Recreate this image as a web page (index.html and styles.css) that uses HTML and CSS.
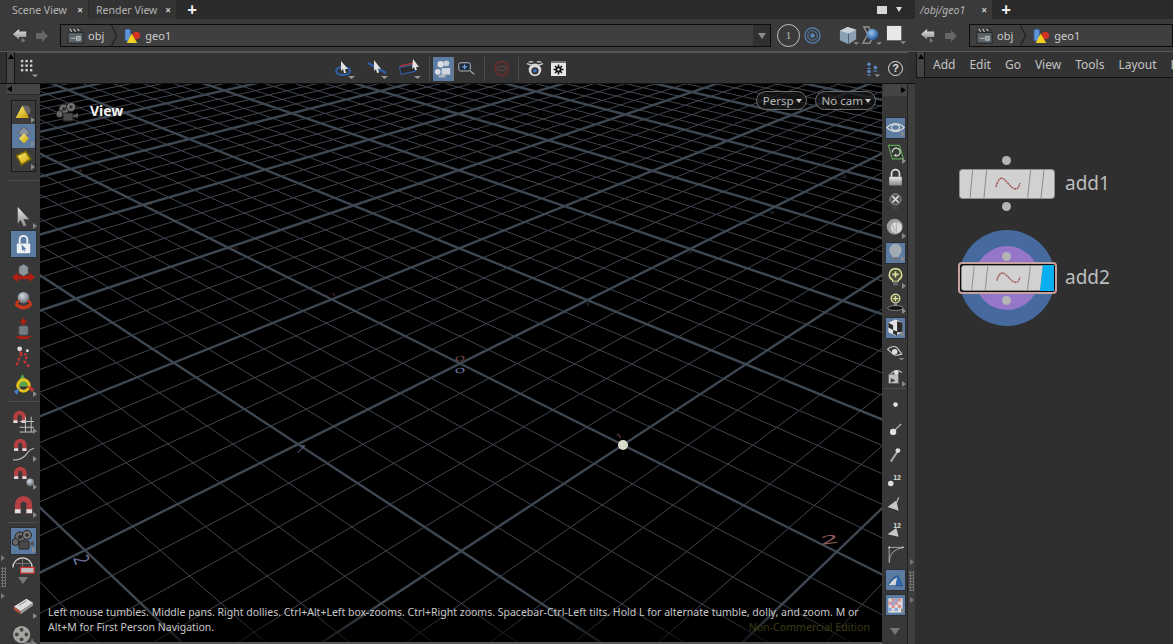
FILE: index.html
```html
<!DOCTYPE html>
<html lang="en">
<head>
<meta charset="utf-8">
<title>Houdini</title>
<link rel="stylesheet" href="styles.css">
</head>
<body>
<svg class="defs" aria-hidden="true"><defs>
<linearGradient id="gy" x1="0" y1="0" x2="0" y2="1"><stop offset="0" stop-color="#e8e8e8"/><stop offset="1" stop-color="#8a8a8a"/></linearGradient>
<radialGradient id="ball" cx=".4" cy=".35" r=".7"><stop offset="0" stop-color="#d5dbe2"/><stop offset="1" stop-color="#5f666e"/></radialGradient>
<radialGradient id="blue" cx=".4" cy=".35" r=".7"><stop offset="0" stop-color="#9cc4ee"/><stop offset="1" stop-color="#1f4f96"/></radialGradient>
<linearGradient id="yel" x1="0" y1="0" x2="1" y2="1"><stop offset="0" stop-color="#fff27a"/><stop offset="1" stop-color="#c79a00"/></linearGradient>
<symbol id="cam" viewBox="0 0 24 24"><circle cx="9" cy="8" r="5" fill="#6d6d6d" stroke="#222"/><circle cx="9" cy="8" r="2" fill="#2c2c2c"/><circle cx="16" cy="6" r="4.500" fill="#777" stroke="#222"/><circle cx="16" cy="6" r="1.800" fill="#2c2c2c"/><circle cx="4.500" cy="13" r="3.500" fill="#666" stroke="#222"/><rect x="8" y="12" width="10" height="8" rx="1" fill="#4a4a4a" stroke="#222"/><path d="M18 14l5-2v5l-5-1z" fill="#555"/></symbol>
<symbol id="objic" viewBox="0 0 18 18"><rect x="1" y="6" width="16" height="11" fill="#5d6469" stroke="#222"/><path d="M1 2l15-1 1 3L1 6z" fill="#33373a"/><path d="M3 2l2 3M7 2l2 3M11 2l2 2" stroke="#ccc" stroke-width="1.2"/><path d="M4 12h5M10 10h4v4h-4z" stroke="#b9c2c4" fill="#8b9396"/></symbol>
<symbol id="geoic" viewBox="0 0 18 18"><path d="M1 3q3-2 6 0v11q-3 2-6 0z" fill="#5f93d8" stroke="#2d5590" stroke-width=".6"/><circle cx="13" cy="9" r="4" fill="#d23323"/><path d="M8 7l6 10H3z" fill="#f3d21f"/></symbol>
<symbol id="backic" viewBox="0 0 18 18"><path d="M1 7l7-6v3h8v6H8v3z" fill="url(#gy)"/><path d="M11 11l4 3-4 3z" fill="#777"/></symbol>
<symbol id="fwdic" viewBox="0 0 14 14"><path d="M13 7L7 1v3H1v6h6v3z" fill="#666"/></symbol>
<symbol id="nodegraph" viewBox="0 0 96 30" preserveAspectRatio="none"><rect x=".5" y=".5" width="95" height="29" rx="3" fill="#d1d1d1" stroke="#8f8f8f"/><path d="M13.600 1L11 29M27.600 1L25 29M71.600 1L68.600 29M85 1L82 29" stroke="#8a8a8a"/><path d="M37 18c2-8 5-11 9-7s7 9 11 9c2 0 3-3 4-6" fill="none" stroke="#a55c5c" stroke-width="1.500" stroke-dasharray="2.400 .6"/></symbol>
<symbol id="redmove" viewBox="0 0 24 24"><path d="M0 17l6-5v3h12v-3l6 5-6 5v-3H6v3z" fill="#b21f12"/><path d="M7 6l5-3 5 3v7l-5 3-5-3z" fill="#8e959b" stroke="#444"/></symbol>
<symbol id="magnet" viewBox="0 0 24 24"><path d="M3 20V11a9 9 0 0 1 18 0v9h-6v-9a3 3 0 0 0-6 0v9z" fill="#b54043"/><path d="M3 16h6v4H3zM15 16h6v4h-6z" fill="#ddd"/></symbol>
<symbol id="bulb" viewBox="0 0 24 24"><path d="M12 1a8 8 0 0 0-5 14l1 3h8l1-3a8 8 0 0 0-5-14z" fill="#a3abb2"/><rect x="9" y="18" width="6" height="4" fill="#6f757b"/></symbol>
</defs></svg>

<div class="app">
  <section class="pane scene">
    <div class="tabs">
      <div class="tab active"><span>Scene View</span><b class="x">×</b></div>
      <div class="tab second"><span>Render View</span><b class="x">×</b></div>
      <div class="plus">+</div>
      <div class="tabspacer"></div>
      <div class="winsq"></div>
      <div class="tridown"></div>
    </div>
    <div class="pathbar">
      <svg class="nav" viewBox="0 0 18 18"><use href="#backic"/></svg>
      <svg class="nav fwd" viewBox="0 0 14 14"><use href="#fwdic"/></svg>
      <div class="path">
        <svg class="crumb" viewBox="0 0 18 18"><use href="#objic"/></svg><span class="ctext">obj</span>
        <svg class="chev" viewBox="0 0 8 24"><path d="M1 0l6 12-6 12" fill="none" stroke="#111"/></svg>
        <svg class="crumb" viewBox="0 0 18 18"><use href="#geoic"/></svg><span class="ctext">geo1</span>
        <div class="grow"></div>
        <div class="drop"><i class="tri"></i></div>
      </div>
      <div class="circle1">1</div>
      <svg class="target" viewBox="0 0 18 18"><circle cx="9" cy="9" r="8" fill="none" stroke="#5b84bd" stroke-width="1.3"/><circle cx="9" cy="9" r="5" fill="none" stroke="#5b84bd"/><circle cx="9" cy="9" r="2.4" fill="#5b84bd"/></svg>
      <svg class="pbic more-sv" viewBox="0 0 24 24"><path d="M3 7l8-4 9 3v10l-8 5-9-4z" fill="#8ba0b3"/><path d="M3 7l9 3 8-4-9-3z" fill="#c9d2d9"/><path d="M12 10v11" stroke="#54616c"/><path d="M17 19h6l-3 3z" fill="#888"/></svg>
      <svg class="pbic" viewBox="0 0 24 24"><path d="M4 3h5l5 10-4 7H3l5-9z" fill="none" stroke="#8a8a8a" stroke-width="1.6"/><circle cx="13" cy="11" r="6" fill="url(#blue)"/><path d="M17 19h6l-3 3z" fill="#888"/></svg>
      <svg class="pbic whitebox" viewBox="0 0 24 24"><rect x="2" y="2" width="15" height="15" fill="#e8e8e8"/><path d="M16 18h6l-3 3z" fill="#888"/></svg>
    </div>
    <div class="toolbar">
      <div class="handle"><i class="triup"></i></div>
      <div class="tbar">
        <svg class="dots" viewBox="0 0 22 22"><g fill="#cfcfcf"><rect x="1" y="1" width="2.6" height="2.6"/><rect x="6" y="1" width="2.6" height="2.6"/><rect x="11" y="1" width="2.6" height="2.6"/><rect x="1" y="6" width="2.6" height="2.6"/><rect x="6" y="6" width="2.6" height="2.6"/><rect x="11" y="6" width="2.6" height="2.6"/><rect x="1" y="11" width="2.6" height="2.6"/><rect x="6" y="11" width="2.6" height="2.6"/><rect x="11" y="11" width="2.6" height="2.6"/></g><path d="M13 17h7l-3.5 3z" fill="#999"/></svg>
        <div class="lead"></div>
        <svg class="ti" viewBox="0 0 24 24"><ellipse cx="10" cy="14" rx="7" ry="4" fill="none" stroke="#2f5fa8" stroke-width="2"/><path d="M8 4l7 8-3 0 1 4-2 0-1-4-2 2z" fill="#e2e2e2"/><path d="M15 19h7l-3.500 3z" fill="#999"/></svg>
        <svg class="ti" viewBox="0 0 24 24"><path d="M2 6l18 10" stroke="#2f5fa8" stroke-width="2.5"/><path d="M8 3l7 9-3-.5 1 4-2 .5-1-4-2 2z" fill="#e2e2e2"/><path d="M15 19h7l-3.500 3z" fill="#999"/></svg>
        <svg class="ti" viewBox="0 0 24 24"><rect x="1" y="9" width="15" height="7" transform="rotate(-12 8 12)" fill="#2b2b2b" stroke="#2f5fa8"/><path d="M1 9l14-3" stroke="#a33" stroke-width="1.5"/><path d="M14 2l6 8-3 0 1 3-2 0-1-3-2 2z" fill="#e2e2e2"/><path d="M15 19h7l-3.500 3z" fill="#999"/></svg>
        <span class="tsep first"></span>
        <div class="tsel"><svg viewBox="0 0 20 22"><circle cx="7" cy="6" r="3.4" fill="#d8dee4"/><circle cx="13" cy="5" r="3" fill="#c8ced6"/><circle cx="4" cy="14" r="3" fill="#d8dee4"/><rect x="8" y="10" width="9" height="7" fill="#cfd6dd"/><rect x="5" y="17" width="7" height="3" fill="#aeb6bf"/></svg></div>
        <svg class="tz" viewBox="0 0 22 18"><rect x="1" y="2" width="14" height="10" rx="2" fill="#1e2a3a" stroke="#cfd6dd"/><path d="M5 7h6M8 4v6" stroke="#6ea4e6" stroke-width="1.5"/><path d="M15 12l5 4" stroke="#aaa" stroke-width="1.4"/></svg>
        <span class="tsep second"></span>
        <svg class="tr" viewBox="0 0 20 20"><circle cx="10" cy="10" r="8" fill="none" stroke="#6b2b2b" stroke-width="2"/><rect x="5" y="8" width="10" height="4" rx="1" fill="none" stroke="#6b4646" stroke-width="1.2"/></svg>
        <span class="tsep"></span>
        <svg class="td" viewBox="0 0 20 20"><path d="M1 4l6 2M19 4l-6 2M3 2h5M12 2h5" stroke="#d5d5d5" stroke-width="1.3"/><circle cx="10" cy="11" r="7" fill="#dadada"/><circle cx="10" cy="12" r="4" fill="#333"/><circle cx="10" cy="12" r="2" fill="#3c7bc8"/></svg>
        <svg class="gear" viewBox="0 0 15 15"><rect width="15" height="15" fill="#e8e8e8"/><rect width="15" height="2" fill="#777"/><circle cx="7.500" cy="8.500" r="3" fill="#111"/><path d="M7.500 3.500v10M2.500 8.500h10M4 5l7 7M11 5l-7 7" stroke="#111" stroke-width="1.500"/><circle cx="7.500" cy="8.500" r="1.200" fill="#e8e8e8"/></svg>
        <div class="grow"></div>
        <svg class="ppl" viewBox="0 0 20 20"><g fill="#5a8ac6"><circle cx="5" cy="4" r="2.200"/><path d="M2 10q3-4 6 0z"/><circle cx="13" cy="8" r="2.200"/><path d="M10 13q3-3 6 0z"/><circle cx="5" cy="13" r="2.200"/><path d="M2 18q3-3 6 0z"/></g><path d="M12 17h7l-3.500 3z" fill="#999"/></svg>
        <div class="help">?</div>
      </div>
    </div>
    <div class="work">
      <div class="ltool">
        <div class="lcorner"><i class="trileft"></i></div>
        <div class="lgroup">
          <div class="gi more"><svg viewBox="0 0 24 24"><circle cx="14" cy="9" r="6" fill="#666"/><path d="M10 3l8 15H2z" fill="url(#yel)"/></svg></div>
          <div class="gi sel more"><svg viewBox="0 0 24 24"><path d="M12 1l7 7-7 7-7-7z" fill="#8d939a" stroke="#555"/><path d="M12 9l6 6-6 6-6-6z" fill="url(#yel)"/></svg></div>
          <div class="gi more"><svg viewBox="0 0 24 24"><path d="M3 8l11-5 6 9-11 7z" fill="url(#yel)" stroke="#7a6a00" stroke-width="2"/></svg></div>
        </div>
        <div class="lsep s1"></div>
        <div class="li arrowtool more"><svg viewBox="0 0 24 24"><path d="M6 2l12 13-6-.5 3 7-3 1-3-7-3 4z" fill="url(#gy)"/></svg></div>
        <div class="li box"><svg viewBox="0 0 24 24"><path d="M8 11V7a4 4 0 0 1 8 0v4" fill="none" stroke="#eef1f4" stroke-width="2"/><rect x="5" y="11" width="14" height="10" rx="1" fill="#eef1f4"/><path d="M10 12l5 5-2 0 .5 2-1 .3-.6-2-1.400 1z" fill="#5b7aa0"/></svg></div>
        <div class="li"><svg viewBox="0 0 24 24"><use href="#redmove"/></svg></div>
        <div class="li"><svg viewBox="0 0 24 24"><circle cx="12" cy="9" r="6" fill="url(#ball)"/><path d="M3 17q1-7 6-5l-3 3q6 5 12 0l-3-3q5-2 6 5-9 9-18 0z" fill="#c2381a"/></svg></div>
        <div class="li"><svg viewBox="0 0 24 24"><path d="M12 1l4 5h-3v5h-2V6H8z" fill="#b21f12"/><rect x="7" y="9" width="10" height="10" rx="2" fill="#747b82" stroke="#444"/><path d="M3 20h18l-5 3H8z" fill="#b21f12"/></svg></div>
        <div class="li"><svg viewBox="0 0 24 24"><circle cx="8" cy="4" r="2.500" fill="#ddd"/><path d="M8 7l8 4-3 6 5 6M10 9l-3 6-2 6" fill="none" stroke="#c33" stroke-width="2.200" stroke-dasharray="3 2"/><circle cx="16" cy="6" r="1.500" fill="#ddd"/></svg></div>
        <div class="li more"><svg viewBox="0 0 24 24"><path d="M11 1l7 13H4z" fill="#58a84b"/><circle cx="12" cy="13" r="6" fill="none" stroke="#e4c01c" stroke-width="3"/><path d="M15 13l8 3-2 4z" fill="#c9382c"/><path d="M8 16l-6 3 3 4z" fill="#4a7ec9"/></svg></div>
        <div class="lsep s2"></div>
        <div class="li more"><svg viewBox="0 0 24 24"><g transform="scale(.72) translate(-1 -1)"><use href="#magnet" width="24" height="24"/></g><path d="M8 12h15M8 18h15M14 7v16M20 7v16M8 23h15" stroke="#c4c4c4" fill="none"/></svg></div>
        <div class="li more"><svg viewBox="0 0 24 24"><g transform="scale(.72) translate(0 -1)"><use href="#magnet" width="24" height="24"/></g><path d="M1 23q10 0 14-6t8-6" fill="none" stroke="#c8c8c8" stroke-width="1.200"/></svg></div>
        <div class="li more"><svg viewBox="0 0 24 24"><g transform="scale(.72) translate(0 -1)"><use href="#magnet" width="24" height="24"/></g><circle cx="19" cy="17" r="4" fill="url(#ball)"/></svg></div>
        <div class="li more"><svg viewBox="0 0 24 24"><use href="#magnet"/></svg></div>
        <div class="lsep s3"></div>
        <div class="li box dark more"><svg viewBox="0 0 24 24"><use href="#cam"/></svg></div>
        <div class="li short"><svg viewBox="0 0 24 24"><path d="M1 14a10 10 0 0 1 20 0" fill="none" stroke="#ddd" stroke-width="1.300"/><path d="M11 4v11M4 10h15" stroke="#777"/><rect x="9" y="14" width="14" height="6" fill="#bdbdbd" stroke="#c33" stroke-width="1.300"/></svg></div>
        <i class="scrolltri"></i>
        <div class="li book more"><svg viewBox="0 0 24 24"><path d="M2 12l13-8 7 4-13 9z" fill="#ddd"/><path d="M2 12l7 5v3l-7-5z" fill="#b0553a"/><path d="M9 17l13-9v3L9 20z" fill="#999"/><path d="M7 11l8-5" stroke="#888"/></svg></div>
        <div class="li more"><svg viewBox="0 0 24 24"><ellipse cx="10" cy="12" rx="9" ry="9" fill="#a6a6a0"/><circle cx="10" cy="7" r="2" fill="#444"/><circle cx="5" cy="12" r="2" fill="#444"/><circle cx="15" cy="12" r="2" fill="#444"/><circle cx="10" cy="17" r="2" fill="#444"/><path d="M12 21h9v-4" fill="none" stroke="#777" stroke-width="2"/></svg></div>
        <div class="leftgrip"><i class="gr"></i><span class="griddots"></span><i class="gr"></i></div>
      </div>
      <div class="viewport" id="viewport">
        <svg class="grid" id="grid" viewBox="0 0 842 558" preserveAspectRatio="none">
          <g id="lines"></g>
          <g class="labels">
            <text class="lr" transform="translate(781 461) rotate(-8) scale(2.600 1)">2</text>
            <text class="lr dim" transform="translate(577 356) rotate(-30) scale(1.100 .6)">1</text>
            <text class="lr dim" transform="translate(415 278) rotate(-10) scale(1.600 .6)">0</text>
            <text class="lb" transform="translate(415 290) rotate(-10) scale(1.600 .6)">0</text>
            <text class="lb" transform="translate(33 474) rotate(72) scale(1.200 1.800)">2</text>
            <text class="lb dim" transform="translate(255 366) rotate(45) scale(1 1.200)">1</text>
            <text class="lr faint" transform="translate(284 212) scale(1.300 .3)">-1</text>
            <text class="lr faint" transform="translate(186 166) scale(1.200 .3)">-2</text>
            <text class="lr faint" transform="translate(102 121) scale(1 .3)">-3</text>
            <text class="lr faint" transform="translate(32 88) scale(1 .3)">-4</text>
            <text class="lb faint" transform="translate(544 222) scale(1.100 .35)">1</text>
            <text class="lb faint" transform="translate(646 170) scale(1.100 .35)">2</text>
            <text class="lb faint" transform="translate(728 130) scale(1 .3)">3</text>
            <text class="lb faint" transform="translate(800 94) scale(1 .3)">4</text>
          </g>
        </svg>
        <div class="fade"></div>
        <svg class="viewcam" viewBox="0 0 24 24"><use href="#cam"/></svg>
        <div class="viewname">View</div>
        <div class="pills"><span class="pill">Persp <i></i></span><span class="pill">No cam <i></i></span></div>
        <div class="help-text"><span>Left mouse tumbles. Middle pans. Right dollies. Ctrl+Alt+Left box-zooms. Ctrl+Right zooms. Spacebar-Ctrl-Left tilts. Hold L for alternate tumble, dolly, and zoom. M or</span><span>Alt+M for First Person Navigation.</span></div>
        <div class="edition">Non-Commercial Edition</div>
        <svg class="origin" viewBox="0 0 12 12"><circle cx="6" cy="6" r="5" fill="#dadccb"/></svg>
      </div>
      <div class="rtool">
        <div class="rcorner"><i class="triright"></i></div>
        <div class="ri sel more"><svg viewBox="0 0 24 24"><path d="M1 12q11-10 22 0-11 10-22 0z" fill="none" stroke="#ddd" stroke-width="1.500"/><ellipse cx="12" cy="12" rx="5" ry="3.500" fill="none" stroke="#ddd" stroke-width="1.300"/></svg></div>
        <div class="ri more"><svg viewBox="0 0 24 24"><path d="M3 3h14l5 17H8z" fill="none" stroke="#5da24f" stroke-width="1.500"/><path d="M8 12a5 5 0 1 1 3 4l2-2" fill="none" stroke="#cfe2c8" stroke-width="1.500"/></svg></div>
        <div class="ri"><svg viewBox="0 0 24 24"><path d="M7 11V7a5 5 0 0 1 10 0v4" fill="none" stroke="#ddd" stroke-width="2.200"/><rect x="4" y="11" width="16" height="11" rx="1" fill="url(#gy)"/></svg></div>
        <div class="ri"><svg viewBox="0 0 24 24"><circle cx="12" cy="8" r="7" fill="#555" stroke="#aaa"/><path d="M8 4l8 8M16 4l-8 8" stroke="#ddd" stroke-width="2"/><rect x="9" y="15" width="6" height="6" fill="#444"/></svg></div>
        <div class="ri more"><svg viewBox="0 0 24 24"><circle cx="11" cy="11" r="10" fill="#9c9c9c"/><circle cx="13" cy="12" r="7" fill="#d8d8d8"/><path d="M13 6v12M8 8l3 9" stroke="#999"/></svg></div>
        <div class="ri sel more"><svg viewBox="0 0 24 24"><use href="#bulb"/></svg></div>
        <div class="ri more"><svg viewBox="0 0 24 24"><path d="M12 1a7.500 7.500 0 0 0-4 14l1 2h6l1-2a7.500 7.500 0 0 0-4-14z" fill="#4e4e3e" stroke="#dfe39a" stroke-width="1.800"/><path d="M12 4v8M8 8h8" stroke="#dfe39a" stroke-width="2"/><rect x="9" y="17" width="6" height="5" fill="#666"/></svg></div>
        <div class="ri more"><svg viewBox="0 0 24 24"><circle cx="12" cy="7" r="5.500" fill="#585848" stroke="#dfe39a" stroke-width="1.600"/><path d="M12 3.500v7M8.500 7h7" stroke="#dfe39a" stroke-width="1.600"/><rect x="10" y="12" width="4" height="6" fill="#888"/><ellipse cx="12" cy="19" rx="10" ry="3" fill="#111" stroke="#999"/></svg></div>
        <div class="ri sel more"><svg viewBox="0 0 24 24"><path d="M3 6l9-4 9 4v12l-9 4-9-4z" fill="#e3e3e3"/><path d="M3 6l6 3v6l-6-3zM14 4l7 2v6l-7-2zM9 15l5 2v5l-5-2zM14 10l7 2v6l-7 0z" fill="#2b2b2b"/></svg></div>
        <div class="ri tri-below"><svg viewBox="0 0 24 24"><path d="M2 8q6-6 12-2l6 8q-8 3-11 0z" fill="none" stroke="#ccc" stroke-width="1.400"/><circle cx="11" cy="11" r="3.500" fill="#ddd"/><path d="M16 19h7l-3.500 3z" fill="#888"/></svg></div>
        <div class="ri rcube more"><svg viewBox="0 0 24 24"><rect x="3" y="9" width="13" height="12" fill="#bfbfbf" stroke="#555"/><path d="M6 9q6-8 14-2" fill="none" stroke="#ccc" stroke-width="1.400"/><circle cx="13" cy="7" r="3" fill="#ddd"/><path d="M6 14l6 3-6 3z" fill="#444"/></svg></div>
        <div class="rsep"></div>
        <div class="ri"><svg viewBox="0 0 24 24"><circle cx="12" cy="12" r="3" fill="#e0e0e0"/></svg></div>
        <div class="ri"><svg viewBox="0 0 24 24"><path d="M10 14l9-9" stroke="#bbb" stroke-width="1.600"/><circle cx="9" cy="15" r="4" fill="#e0e0e0"/></svg></div>
        <div class="ri"><svg viewBox="0 0 24 24"><path d="M6 21l8-12" stroke="#aaa" stroke-width="2.400"/><circle cx="15" cy="7" r="3" fill="#ddd"/></svg></div>
        <div class="ri"><svg viewBox="0 0 24 24"><circle cx="6" cy="17" r="3.500" fill="#e0e0e0"/><text class="num" x="9" y="12">12</text></svg></div>
        <div class="ri"><svg viewBox="0 0 24 24"><path d="M2 15l11-8 3 13z" fill="#c8c8c8"/><path d="M13 11l3-8" stroke="#bbb" stroke-width="1.500"/></svg></div>
        <div class="ri"><svg viewBox="0 0 24 24"><path d="M2 18l11-8 3 11z" fill="#c8c8c8"/><text class="num" x="9" y="10">12</text></svg></div>
        <div class="ri"><svg viewBox="0 0 24 24"><path d="M4 22q0-16 18-19M4 22V3h18" fill="none" stroke="#c0c0c0"/><rect x="3" y="2" width="2" height="2" fill="#ddd"/><rect x="20" y="2" width="2" height="2" fill="#ddd"/></svg></div>
        <div class="ri sel selb"><svg viewBox="0 0 24 24"><path d="M3 18q5-11 12-12l6 13z" fill="#2f6ab0" stroke="#1c4c85"/><path d="M3 18q5-7 11-10l-2 10z" fill="#d8d8d8"/></svg></div>
        <div class="ri sel more"><svg viewBox="0 0 24 24"><rect x="3" y="3" width="18" height="18" fill="#ddd"/><g fill="#d98a8a"><rect x="7" y="3" width="4" height="4"/><rect x="15" y="3" width="4" height="4"/><rect x="3" y="7" width="4" height="4"/><rect x="11" y="7" width="4" height="4"/><rect x="7" y="11" width="4" height="4"/><rect x="15" y="11" width="4" height="4"/></g><g fill="#8aa5d9"><rect x="3" y="15" width="4" height="4"/><rect x="11" y="15" width="4" height="4"/><rect x="11" y="3" width="4" height="4"/><rect x="7" y="7" width="4" height="4"/></g></svg></div>
        <i class="scrolltri r"></i>
      </div>
      <div class="splitter"><i class="gr"></i><span class="griddots"></span><i class="gr"></i></div>
    </div>
  </section>

  <section class="pane net">
    <div class="tabs">
      <div class="tab active nettab"><span>/obj/geo1</span><b class="x">×</b></div>
      <div class="plus">+</div>
    </div>
    <div class="pathbar netpath">
      <svg class="nav" viewBox="0 0 18 18"><use href="#backic"/></svg>
      <svg class="nav fwd" viewBox="0 0 14 14"><use href="#fwdic"/></svg>
      <div class="path">
        <svg class="crumb" viewBox="0 0 18 18"><use href="#objic"/></svg><span class="ctext">obj</span>
        <svg class="chev" viewBox="0 0 8 24"><path d="M1 0l6 12-6 12" fill="none" stroke="#111"/></svg>
        <svg class="crumb" viewBox="0 0 18 18"><use href="#geoic"/></svg><span class="ctext">geo1</span>
      </div>
    </div>
    <div class="menubar">
      <div class="handle"><i class="triup"></i></div>
      <nav class="menus"><span>Add</span><span>Edit</span><span>Go</span><span>View</span><span>Tools</span><span>Layout</span><span>Labs</span></nav>
    </div>
    <div class="canvas">
      <div class="node n1">
        <i class="dot d-top"></i>
        <svg class="nodebody" viewBox="0 0 96 30"><use href="#nodegraph"/></svg>
        <i class="dot d-bot"></i>
        <span class="nodename">add1</span>
      </div>
      <div class="node n2">
        <i class="ring blue"></i><i class="ring purple"></i>
        <i class="dot d-top"></i>
        <div class="selected"><svg class="nodebody" viewBox="0 0 96 30" preserveAspectRatio="none"><use href="#nodegraph"/></svg><b class="flag"></b></div>
        <i class="dot d-bot"></i>
        <span class="nodename">add2</span>
      </div>
    </div>
  </section>
</div>
<script src="grid.js"></script>
</body>
</html>
```
FILE: styles.css
```css
* { box-sizing: border-box; }
html, body { margin: 0; height: 100%; overflow: hidden; background: #333; }
body { font-family: "Noto Sans", "Open Sans", sans-serif; color: #c8c8c8; }
.defs { position: absolute; width: 0; height: 0; }
.app { display: flex; width: 1173px; height: 644px; }
.pane { display: flex; flex-direction: column; height: 644px; }
.scene { width: 915px; flex: none; }
.net { flex: 1; min-width: 0; background: #2f2f2f; }
.grow { flex: 1; }

.tabs { display: flex; align-items: center; height: 19px; background: #2a2a2a; flex: none; }
.tabspacer { flex: 1; }
.tab { display: flex; align-items: center; height: 19px; font-size: 10.5px; color: #b4b4b4; width: 88px; padding-left: 12px; background: #3a3a3a; position: relative; flex: none; }
.tab.second { margin-left: 1px; width: 87px; padding-left: 7px; background: #333; }
.tab .x { position: absolute; right: 5px; top: 3px; font-size: 10px; color: #d0d0d0; }
.plus { font-size: 17px; font-weight: 700; color: #eee; margin-left: 9px; line-height: 18px; flex: none; width: 14px; text-align: center; }
.winsq { width: 10px; height: 8px; background: #d8d8d8; margin-right: 9px; }
.tridown { width: 0; height: 0; border: 3.500px solid transparent; border-top: 5px solid #ddd; border-bottom: 0; margin-right: 2px; }
.scene .tabs { padding-right: 11px; }
.nettab { width: 77px; padding-left: 5px; font-style: italic; }
.nettab + .plus { margin-left: 7px; }

.pathbar { display: flex; align-items: center; height: 33px; background: #3a3a3a; padding: 5px 0 4px 12px; flex: none; border-bottom: 1px solid #555; }
.nav { width: 16px; height: 16px; flex: none; }
.nav.fwd { width: 14px; height: 14px; margin-left: 7px; margin-right: 11px; }
.path { display: flex; align-items: center; width: 711px; height: 23px; border: 1px solid #0c0c0c; background: #3f3f3f; padding-left: 6px; flex: none; }
.crumb { width: 17px; height: 17px; flex: none; }
.ctext { font-size: 11px; color: #ccc; margin-left: 4px; }
.chev { width: 8px; height: 21px; margin: 0 6px 0 6px; flex: none; }
.drop { width: 17px; height: 21px; background: #303030; display: flex; align-items: center; justify-content: center; }
.tri { width: 0; height: 0; border: 4px solid transparent; border-top: 6px solid #8a8a8a; border-bottom: 0; }
.circle1 { width: 23px; height: 23px; border: 1px solid #c4c4c4; border-radius: 50%; margin-left: 6px; text-align: center; font: 11px/21px "Liberation Serif", serif; color: #bbb; flex: none; }
.target { width: 17px; height: 17px; margin-left: 4px; flex: none; }
.pbic { width: 23px; height: 23px; flex: none; margin-left: 0; }
.more-sv { margin-left: 16px; }
.whitebox { margin-left: 2px; flex: none; }
.netpath { padding-left: 5px; }
.netpath .path { width: 204px; }
.netpath .nav.fwd { margin-left: 8px; margin-right: 11px; }

.toolbar { display: flex; height: 32px; background: #303030; flex: none; padding: 0 7px 0 6px; border-bottom: 1px solid #111; }
.handle { width: 9px; height: 100%; background: #444; border-left: 1px solid #1a1a1a; border-right: 1px solid #111; display: flex; justify-content: center; padding-top: 2px; flex: none; }
.triup { width: 0; height: 0; border: 3.500px solid transparent; border-bottom: 5px solid #000; border-top: 0; }
.tbar { flex: 1; display: flex; align-items: center; padding-left: 3px; padding-top: 1px; border-top: 1px solid #555; background: #333; }
.dots { width: 20px; height: 20px; margin-left: 2px; flex: none; }
.lead { width: 284px; flex: none; }
.ti { width: 24px; height: 24px; margin-left: 9px; flex: none; }
.tsep { width: 1px; height: 24px; background: #4c4c4c; margin: 0 7px 0 5px; flex: none; }
.tsep.first { margin: 0 3px 0 6px; }
.tsep.second { margin: 0 8px 0 8px; }
.tsel { width: 21px; height: 24px; background: #5c7ba0; padding: 1px; border-right: 1px solid #777; flex: none; }
.tsel svg { display: block; width: 19px; height: 22px; }
.tz { width: 18px; height: 15px; margin-left: 4px; flex: none; }
.tr { width: 17px; height: 17px; margin: 0 3px 0 0; flex: none; }
.td { width: 18px; height: 18px; flex: none; }
.gear { width: 15px; height: 15px; margin-left: 7px; flex: none; }
.ppl { width: 16px; height: 16px; margin-right: 7px; flex: none; }
.help { width: 15px; height: 15px; border: 1.500px solid #ddd; border-radius: 50%; font: 700 11px/12px "Liberation Sans", sans-serif; color: #ddd; text-align: center; margin-right: 5px; flex: none; }

.work { flex: 1; display: flex; min-height: 0; background: #333; }
.ltool { width: 40px; flex: none; position: relative; display: flex; flex-direction: column; align-items: center; background: #383838; padding-left: 6px; }
.lcorner { align-self: stretch; height: 11px; background: #444; display: flex; align-items: center; padding-left: 1px; flex: none; border-bottom: 1px solid #2a2a2a; }
.trileft { width: 0; height: 0; border: 3.500px solid transparent; border-right: 5px solid #000; border-left: 0; }
.triright { width: 0; height: 0; border: 3.500px solid transparent; border-left: 5px solid #000; border-right: 0; }
.lgroup { width: 25px; height: 72px; margin-top: 5px; border: 1px solid #1b1b1b; flex: none; background: #3c3c3c; margin-left: 1px; }
.gi { height: 23.300px; display: flex; align-items: center; justify-content: center; position: relative; }
.gi svg { width: 20px; height: 20px; }
.gi.sel { background: #5c7ba0; }
.lsep { height: 1px; width: 31px; background: #4f4f4f; flex: none; }
.lsep.s1 { margin-top: 8px; margin-bottom: 22px; }
.lsep.s2 { margin-top: 3px; margin-bottom: 5px; }
.lsep.s3 { margin-top: 3px; margin-bottom: 4px; }
.li { width: 27px; height: 28px; display: flex; align-items: center; justify-content: center; position: relative; flex: none; }
.li svg { width: 23px; height: 23px; }
.arrowtool { height: 27px; }
.box { background: #5c7ba0; border: 1px solid #2a2f36; }
.box.dark svg { width: 24px; height: 24px; }
.short { height: 21px; }
.book { margin-top: 8px; }
.more::after { content: ""; position: absolute; right: 0; bottom: 1px; width: 0; height: 0; border: 3.500px solid transparent; border-left: 4.500px solid #8a8a8a; border-right: 0; }
.scrolltri { width: 0; height: 0; border: 5px solid transparent; border-top: 7px solid #777; border-bottom: 0; margin-top: 1px; flex: none; }
.leftgrip, .splitter { display: flex; flex-direction: column; align-items: center; gap: 6px; }
.leftgrip { position: absolute; left: 0; top: 471px; width: 6px; }
.gr { width: 0; height: 0; border: 3px solid transparent; border-left: 4px solid #777; border-right: 0; }
.griddots { width: 5px; height: 20px; background-image: radial-gradient(#707070 1px, transparent 1.200px); background-size: 3px 3px; }

.viewport { width: 842px; position: relative; background: #000; flex: none; overflow: hidden; border-bottom: 2px solid #5a5a5a; height: 560px; }
.grid { position: absolute; left: 0; top: 0; width: 842px; height: 558px; display: block; }
.minor { stroke: #40474f; stroke-width: 1; fill: none; }
.major { stroke: #3e4852; stroke-width: 2.400; fill: none; }
.labels text { font: 12px "Noto Sans", sans-serif; }
.lr { fill: #8f5c5c; }
.lb { fill: #6c7098; }
.dim { opacity: .7; }
.faint { opacity: .45; }
.fade { position: absolute; left: 0; right: 0; bottom: 0; height: 36px; background: linear-gradient(rgba(0,0,0,0), rgba(0,0,0,.7)); }
.viewcam { position: absolute; left: 15px; top: 17px; width: 24px; height: 24px; }
.viewname { position: absolute; left: 50px; top: 17px; font-size: 14px; font-weight: 700; color: #f2f2f2; line-height: 20px; }
.pills { position: absolute; right: 6px; top: 7px; display: flex; gap: 8px; }
.pill { height: 19px; border: 1px solid #6d6d6d; border-radius: 10px; font-size: 11.500px; line-height: 16px; padding: 0 4px 0 6px; color: #b9b9b9; background: rgba(24,24,24,.75); display: flex; align-items: center; gap: 2px; }
.pill i { width: 0; height: 0; border: 3.500px solid transparent; border-top: 4px solid #ccc; border-bottom: 0; }
.help-text { position: absolute; left: 8px; top: 521px; font-size: 10.500px; line-height: 15px; color: #c9c9c9; white-space: nowrap; }
.help-text span { display: block; width: fit-content; }
.edition { position: absolute; right: 12px; top: 536px; font-size: 10.600px; line-height: 15px; color: #3d3d12; }
.origin { position: absolute; left: 577px; top: 355px; width: 12px; height: 12px; }

.rtool { width: 26px; flex: none; display: flex; flex-direction: column; align-items: center; background: #383838; border-right: 1px solid #1f1f1f; padding-left: 1px; }
.rcorner { align-self: stretch; height: 12px; background: #444; display: flex; justify-content: flex-end; align-items: center; padding-right: 1px; margin-bottom: 19px; flex: none; }
.ri { width: 21px; height: 25px; display: flex; align-items: center; justify-content: center; position: relative; flex: none; }
.ri svg { width: 19px; height: 19px; }
.ri.sel { background: #5c7ba0; height: 22px; margin: 1.500px 0; border: 1px solid #2a2f36; }
.ri.rcube { height: 23px; }
.ri.selb { margin-top: 2px; }
.rsep { height: 1px; width: 22px; background: #4f4f4f; margin-bottom: 3px; flex: none; }
.scrolltri.r { margin-top: 10px; }
.num { font: 700 9px "Liberation Sans", sans-serif; fill: #ddd; }
.splitter { width: 7px; flex: none; background: #3e3e3e; padding-top: 475px; }

.menubar { display: flex; height: 26px; flex: none; background: #333; border-bottom: 1px solid #111; margin-left: 1px; }
.menus { display: flex; flex: 1; align-items: center; overflow: hidden; font-size: 12px; color: #c4c4c4; padding-left: 8px; gap: 14px; white-space: nowrap; }
.canvas { flex: 1; position: relative; background: #2f2f2f; }
.node { position: absolute; width: 96px; height: 30px; }
.n1 { left: 44px; top: 91px; }
.n2 { left: 44px; top: 185px; }
.nodebody { display: block; width: 96px; height: 30px; }
.dot { position: absolute; left: 43px; width: 9px; height: 9px; border-radius: 50%; background: #b4b4b4; }
.d-top { top: -13px; }
.d-bot { top: 33px; }
.n2 .d-top { top: -11px; }
.n2 .d-bot { top: 33px; }
.ring { position: absolute; border-radius: 50%; }
.blue { left: 0; top: -33px; width: 96px; height: 96px; background: #466a9e; }
.purple { left: 16px; top: -17px; width: 64px; height: 64px; background: #9576c9; }
.selected { position: absolute; left: -1px; top: -1px; width: 99px; height: 32px; border: 2px solid #c7a0a0; border-radius: 4px; padding: 1px; background: #0c0c0c; overflow: hidden; }
.selected .nodebody { width: 93px; height: 26px; }
.flag { position: absolute; right: 1px; top: 1px; width: 14px; height: 26px; background: #07aef0; clip-path: polygon(3px 0, 100% 0, 100% 100%, 0 100%); }
.nodename { position: absolute; left: 106px; top: 0; font-size: 19px; line-height: 28px; color: #bdbdbd; white-space: nowrap; }
```
FILE: grid.js
```js
// Ground-plane grid: projective map from grid units (u, v) to viewport pixels.
(function () {
  var OX = 40, OY = 84;
  function project(u, v) {
    var w = 1 - 0.119 * u + 0.1197 * v;
    return [
      (460 + 88.8 * u + 197.7 * v) / w - OX,
      (363.5 + 28.5 * u - 27.5 * v) / w - OY,
      w
    ];
  }
  var MIN = -40, MAX = 40, NEAR = 0.03, out = [];
  function seg(fixedU, k) {
    // walk the line, clipping where it goes behind the camera
    var a = null, b = null;
    for (var t = MIN; t <= MAX; t += 0.05) {
      var p = fixedU ? project(k, t) : project(t, k);
      if (p[2] > NEAR) { if (!a) a = p; b = p; }
    }
    return a ? [a, b] : null;
  }
  for (var i = MIN * 5; i <= MAX * 5; i++) {
    var cls = i % 5 === 0 ? "major" : "minor";
    [true, false].forEach(function (f) {
      var s = seg(f, i / 5);
      if (s) out.push('<line class="' + cls + '" x1="' + s[0][0].toFixed(1) + '" y1="' + s[0][1].toFixed(1) +
        '" x2="' + s[1][0].toFixed(1) + '" y2="' + s[1][1].toFixed(1) + '"/>');
    });
  }
  // minor first so major lines draw on top
  out.sort(function (a, b) { return (a.indexOf("major") > -1) - (b.indexOf("major") > -1); });
  document.getElementById("lines").innerHTML = out.join("");
})();
```
